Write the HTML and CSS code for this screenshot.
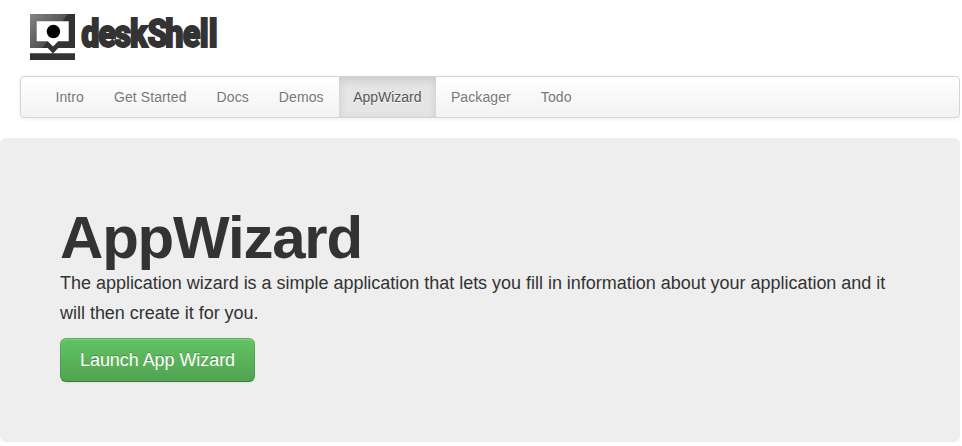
FILE: index.html
```html
<!DOCTYPE html>
<html lang="en">
<head>
<meta charset="utf-8">
<title>deskShell</title>
<link rel="stylesheet" href="styles.css">
</head>
<body>
<header class="header">
  <svg class="logo" width="190" height="48" viewBox="30 13 190 48" role="img" aria-label="deskShell">
    <defs>
      <linearGradient id="shine" gradientUnits="userSpaceOnUse" x1="30" y1="14" x2="58" y2="40">
        <stop offset="0" stop-color="#858585"/>
        <stop offset="1" stop-color="#444"/>
      </linearGradient>
    </defs>
    <path fill="#333" d="M30 14h45v34H58.3l-5.3 5.6-5.3-5.6H30zM30 53.2h45V60H30z"/>
    <path fill="url(#shine)" d="M30 14h38L42 48H30z"/>
    <path fill="#fff" d="M36.7 21.2h32v20.1H58.2L53 46.4l-5.2-5.1H36.7z"/>
    <circle cx="53.4" cy="31.5" r="6.7"/>
    <g class="wordmark" transform="translate(0 47.3) scale(.84 1)">
      <text x="96.6 116.9 136.3 154.8 175.6 196.8 217.5 237.9 248.5">deskShell</text>
    </g>
  </svg>
</header>
<nav class="navbar">
  <a href="#">Intro</a>
  <a href="#">Get Started</a>
  <a href="#">Docs</a>
  <a href="#">Demos</a>
  <a href="#" class="active">AppWizard</a>
  <a href="#">Packager</a>
  <a href="#">Todo</a>
</nav>
<main class="hero">
  <h1>AppWizard</h1>
  <p>The application wizard is a simple application that lets you fill in information about your application and it will then create it for you.</p>
  <a class="button" href="#">Launch App Wizard</a>
</main>
</body>
</html>
```
FILE: styles.css
```css
* { box-sizing: border-box; }
body {
  margin: 0;
  width: 960px;
  background: #fff;
  color: #333;
  font-family: "Liberation Sans", Arial, sans-serif;
  font-size: 14px;
  line-height: 20px;
}
.header {
  height: 76px;
  padding: 13px 0 0 30px;
}
.logo { display: block; }
.wordmark {
  font-family: Roboto, sans-serif;
  font-size: 38.5px;
  font-weight: 900;
  fill: #333;
  stroke: #333;
  stroke-width: 1.8px;
}
.navbar {
  display: flex;
  height: 42px;
  margin: 0 0 20px 20px;
  padding-left: 19.5px;
  border: 1px solid #d4d4d4;
  border-radius: 4px;
  background: linear-gradient(#fff, #f2f2f2);
  box-shadow: 0 1px 4px rgba(0, 0, 0, .065);
}
.navbar a {
  padding: 10px 15px;
  color: #777;
  letter-spacing: .09px;
  text-decoration: none;
  text-shadow: 0 1px 0 #fff;
}
.navbar .active {
  padding: 10px 14.5px;
  color: #555;
  letter-spacing: -.02px;
  background: #e5e5e5;
  box-shadow: inset 0 3px 8px rgba(0, 0, 0, .125);
}
.hero {
  height: 304px;
  padding: 70px 60px 60px;
  border-radius: 6px;
  background: #eee;
  font-size: 18px;
  line-height: 30px;
}
.hero h1 {
  margin: 0;
  font-size: 60px;
  line-height: 60px;
  letter-spacing: -1.2px;
}
.hero p { margin: 0 0 10px; letter-spacing: -.02px; }
.button {
  display: inline-block;
  height: 44px;
  padding: 6px 19px;
  border: 1px solid;
  border-color: rgba(0, 0, 0, .1) rgba(0, 0, 0, .1) rgba(0, 0, 0, .25);
  border-radius: 6px;
  background: #5bb75b linear-gradient(#62c462, #51a351) border-box;
  box-shadow: inset 0 1px 0 rgba(255, 255, 255, .2), 0 1px 2px rgba(0, 0, 0, .05);
  color: #fff;
  letter-spacing: -.06px;
  text-decoration: none;
  text-shadow: 0 -1px 0 rgba(0, 0, 0, .25);
}
```
